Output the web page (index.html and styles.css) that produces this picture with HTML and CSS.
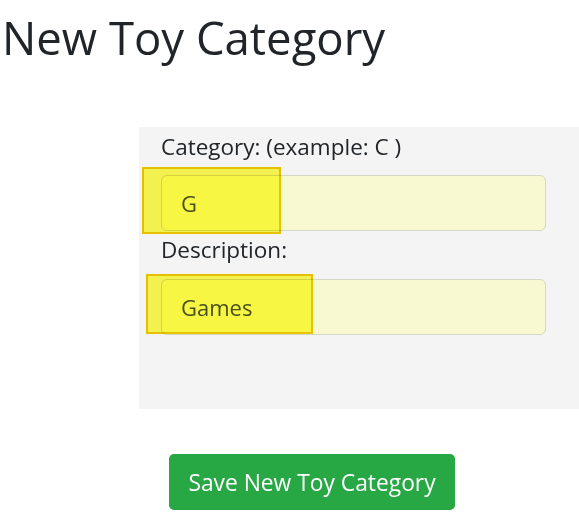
FILE: index.html
```html
<!DOCTYPE html>
<html>
<head>
<meta charset="utf-8">
<link rel="stylesheet" href="styles.css">
</head>
<body>
<h1 class="title">New Toy Category</h1>
<form class="panel">
  <label class="label" for="cat">Category: (example: C )</label>
  <div class="field">
    <input class="input" id="cat" type="text" value="G">
    <span class="mark mark-1"></span>
  </div>
  <label class="label label-2" for="desc">Description:</label>
  <div class="field">
    <input class="input" id="desc" type="text" value="Games">
    <span class="mark mark-2"></span>
  </div>
</form>
<div class="actions">
  <button class="btn" type="button">Save New Toy Category</button>
</div>
</body>
</html>
```
FILE: styles.css
```css
html, body {
  margin: 0;
  padding: 0;
  background: #fff;
  font-family: "Open Sans", "Noto Sans", sans-serif;
  color: #212529;
}
.title {
  margin: 0;
  padding: 7px 0 0 2px;
  font-size: 45.5px;
  font-weight: 400;
  line-height: 60px;
  height: 127px;
  box-sizing: border-box;
}
.panel {
  margin: 0 0 0 139px;
  background: #f4f4f4;
  height: 282px;
  padding: 5px 33px 0 22px;
  box-sizing: border-box;
  display: flex;
  flex-direction: column;
}
.label {
  font-size: 22.5px;
  line-height: 30px;
  height: 43px;
  display: block;
}
.label-2 {
  height: 48px;
  padding-top: 4px;
  box-sizing: border-box;
}
.field {
  position: relative;
  width: 385px;
}
.input {
  display: block;
  width: 100%;
  height: 56px;
  box-sizing: border-box;
  border: 1px solid #d6d6c6;
  border-radius: 6px;
  background: #f8f9d0;
  font-family: inherit;
  font-size: 22px;
  color: #495057;
  padding: 0 19px;
  outline: none;
}
.mark {
  position: absolute;
  background: #fdfc52;
  border: 2px solid #f0c800;
  box-sizing: border-box;
  mix-blend-mode: multiply;
}
.mark-1 {
  left: -19px;
  top: -8px;
  width: 139px;
  height: 67px;
}
.mark-2 {
  left: -15px;
  top: -5px;
  width: 167px;
  height: 60px;
}
.actions {
  padding: 45px 0 0 169px;
}
.btn {
  background: #28a745;
  color: #fff;
  border: none;
  border-radius: 5px;
  width: 286px;
  height: 56px;
  font-family: inherit;
  font-size: 22.8px;
  padding: 0;
}
```
